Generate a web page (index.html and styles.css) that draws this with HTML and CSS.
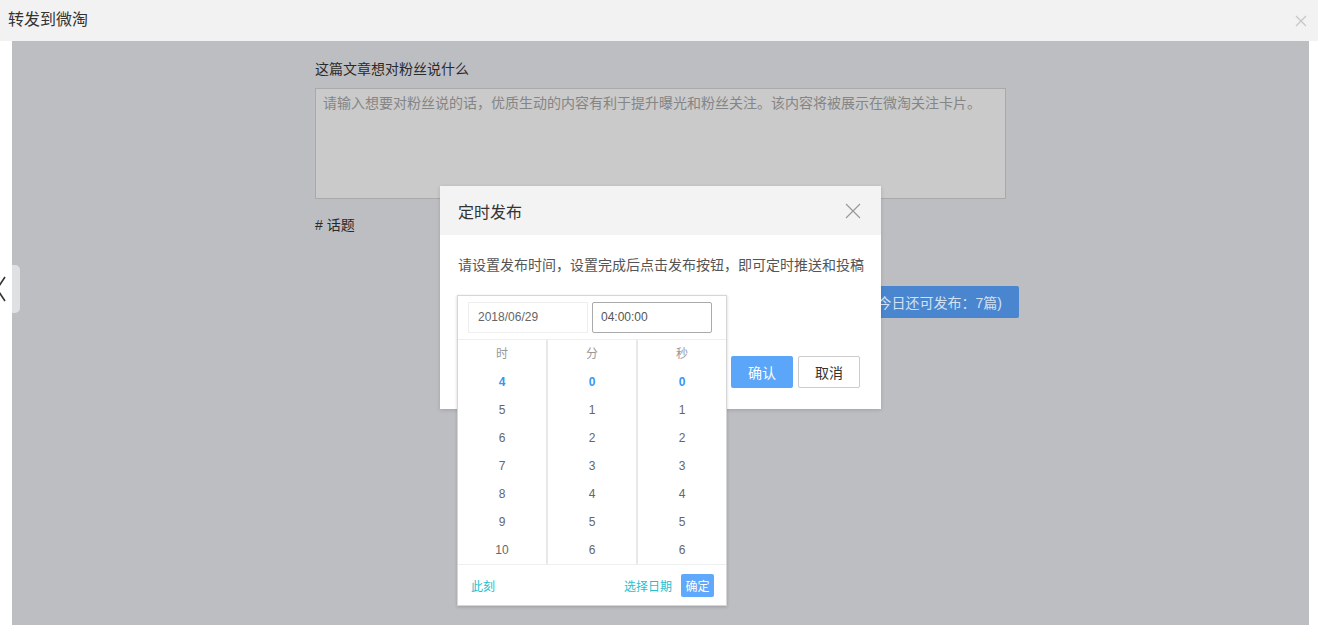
FILE: index.html
```html
<!DOCTYPE html>
<html lang="zh-CN">
<head>
    <meta charset="UTF-8">
    <title>转发到微淘</title>
    <link rel="stylesheet" href="styles.css">
</head>
<body>

    <div class="topbar">
        <span class="topbar-title">转发到微淘</span>
        <svg class="topbar-close" width="12" height="12" viewBox="0 0 12 12">
            <path d="M1 1L11 11M11 1L1 11" stroke="#c6c6c6" stroke-width="1.2" fill="none"/>
        </svg>
    </div>

    <div class="stage">
        <div class="side-tab">
            <svg class="side-arrow" width="8" height="26" viewBox="0 0 8 26">
                <path d="M5 1L-3 13L5 25" stroke="#333" stroke-width="1.6" fill="none"/>
            </svg>
        </div>

        <div class="panel">
            <div class="form">
                <div class="form-label">这篇文章想对粉丝说什么</div>
                <div class="textarea">请输入想要对粉丝说的话，优质生动的内容有利于提升曝光和粉丝关注。该内容将被展示在微淘关注卡片。</div>
                <div class="topic"># 话题</div>
                <div class="publish-row">
                    <button class="publish-btn">定时发布 (今日还可发布：7篇)</button>
                </div>
            </div>

            <div class="dialog">
                <div class="dialog-head">
                    <span class="dialog-title">定时发布</span>
                    <svg width="16" height="16" viewBox="0 0 16 16">
                        <path d="M1 1L15 15M15 1L1 15" stroke="#999" stroke-width="1.2" fill="none"/>
                    </svg>
                </div>
                <div class="dialog-body">
                    <p class="dialog-text">请设置发布时间，设置完成后点击发布按钮，即可定时推送和投稿</p>
                    <div class="dialog-actions">
                        <button class="btn btn-primary">确认</button>
                        <button class="btn btn-default">取消</button>
                    </div>
                </div>

                <div class="picker">
                    <div class="picker-inputs">
                        <div class="picker-input">2018/06/29</div>
                        <div class="picker-input active">04:00:00</div>
                    </div>
                    <div class="picker-cols">
                        <ul class="picker-col">
                            <li class="col-head">时</li>
                            <li class="selected">4</li>
                            <li>5</li>
                            <li>6</li>
                            <li>7</li>
                            <li>8</li>
                            <li>9</li>
                            <li>10</li>
                        </ul>
                        <ul class="picker-col">
                            <li class="col-head">分</li>
                            <li class="selected">0</li>
                            <li>1</li>
                            <li>2</li>
                            <li>3</li>
                            <li>4</li>
                            <li>5</li>
                            <li>6</li>
                        </ul>
                        <ul class="picker-col">
                            <li class="col-head">秒</li>
                            <li class="selected">0</li>
                            <li>1</li>
                            <li>2</li>
                            <li>3</li>
                            <li>4</li>
                            <li>5</li>
                            <li>6</li>
                        </ul>
                    </div>
                    <div class="picker-foot">
                        <span class="picker-link">此刻</span>
                        <div class="picker-foot-right">
                            <span class="picker-link">选择日期</span>
                            <button class="picker-ok">确定</button>
                        </div>
                    </div>
                </div>
            </div>
        </div>
    </div>

</body>
</html>
```

FILE: styles.css
```css
* {
    box-sizing: border-box;
}
body {
    margin: 0;
    width: 1318px;
    height: 635px;
    overflow: hidden;
    background-color: #fff;
    font-family: "Liberation Sans", "Noto Sans CJK SC", sans-serif;
    color: #333;
}
button {
    font-family: inherit;
    border: none;
    cursor: pointer;
}

.topbar {
    height: 41px;
    background-color: #f2f2f2;
    display: flex;
    align-items: center;
    justify-content: space-between;
    padding: 0 11px 0 8px;
}
.topbar-title {
    font-size: 16px;
    color: #333;
    margin-top: -5px;
}

.stage {
    display: flex;
    padding: 0 9px 0 12px;
    position: relative;
}
.side-tab {
    position: absolute;
    z-index: 2;
    left: 0;
    top: 224px;
    width: 20px;
    height: 48px;
    border-radius: 0 5px 5px 0;
    background: linear-gradient(to right, #fff 0, #fff 12px, #dfe0e2 12px);
}
.side-arrow {
    position: absolute;
    left: 0;
    top: 11px;
}
.panel {
    flex: 1;
    height: 584px;
    background-color: #bdbec2;
    position: relative;
}

.form {
    padding: 18px 0 0 303px;
}
.form-label {
    font-size: 14px;
    line-height: 20px;
    color: #2a2a2a;
}
.textarea {
    margin-top: 9px;
    width: 691px;
    height: 111px;
    border: 1px solid #a9a9ab;
    background-color: #cacaca;
    padding: 4px 7px;
    font-size: 14px;
    line-height: 20px;
    color: #858585;
}
.topic {
    margin-top: 16px;
    font-size: 14px;
    line-height: 20px;
    color: #2a2a2a;
}
.publish-row {
    margin-top: 51px;
    width: 704px;
    display: flex;
    justify-content: flex-end;
}
.publish-btn {
    height: 32px;
    padding: 0 17px;
    background-color: #4a86cf;
    color: #d4e1f2;
    font-size: 14px;
    border-radius: 2px;
}

.dialog {
    position: absolute;
    left: 428px;
    top: 145px;
    width: 441px;
    height: 223px;
    background-color: #fff;
    box-shadow: 0 1px 4px rgba(0, 0, 0, 0.15);
}
.dialog-head {
    height: 49px;
    background-color: #f3f3f3;
    display: flex;
    align-items: center;
    justify-content: space-between;
    padding: 0 20px 0 18px;
}
.dialog-title {
    font-size: 16px;
    color: #333;
}
.dialog-body {
    padding: 20px 21px 21px 18px;
}
.dialog-text {
    margin: 0;
    font-size: 14px;
    line-height: 20px;
    color: #555;
    white-space: nowrap;
}
.dialog-actions {
    margin-top: 81px;
    display: flex;
    justify-content: flex-end;
    gap: 5px;
}
.btn {
    width: 62px;
    height: 32px;
    font-size: 14px;
    border-radius: 2px;
}
.btn-primary {
    background-color: #5ba6f9;
    color: #fff;
}
.btn-default {
    background-color: #fff;
    border: 1px solid #ccc;
    color: #333;
}

.picker {
    position: absolute;
    left: 17px;
    top: 109px;
    width: 270px;
    height: 311px;
    background-color: #fff;
    border: 1px solid #d6d6d8;
    box-shadow: 0 1px 3px rgba(0, 0, 0, 0.18);
    display: flex;
    flex-direction: column;
}
.picker-inputs {
    display: flex;
    gap: 4px;
    padding: 6px 14px 6px 10px;
    border-bottom: 1px solid #eee;
}
.picker-input {
    width: 120px;
    height: 31px;
    border: 1px solid #eee;
    padding-left: 9px;
    font-size: 12px;
    line-height: 29px;
    color: #666;
}
.picker-input.active {
    border-color: #aaa;
    border-radius: 2px;
    padding-left: 8px;
    color: #555;
}
.picker-cols {
    display: flex;
    border-bottom: 1px solid #eee;
}
.picker-col {
    flex: 1;
    margin: 0;
    padding: 0;
    list-style: none;
    border-right: 2px solid #e8e8e8;
}
.picker-col:last-child {
    border-right: none;
}
.picker-col li {
    height: 28px;
    line-height: 28px;
    text-align: center;
    font-size: 12px;
    color: #666;
}
.picker-col li.col-head {
    color: #999;
}
.picker-col li.selected {
    color: #3b93f2;
    font-weight: bold;
}
.picker-foot {
    flex: 1;
    display: flex;
    align-items: center;
    justify-content: space-between;
    padding: 0 12px 0 13px;
}
.picker-foot-right {
    display: flex;
    align-items: center;
    gap: 9px;
}
.picker-link {
    font-size: 12px;
    color: #1ec0ce;
}
.picker-ok {
    width: 33px;
    height: 23px;
    padding: 0;
    background-color: #5fa8fb;
    color: #fff;
    font-size: 12px;
    border-radius: 2px;
}
```
